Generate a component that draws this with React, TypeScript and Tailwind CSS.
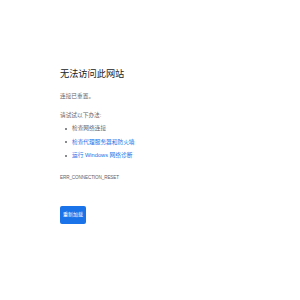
export default function App() {
  const items = [
    { text: '检查网络连接', link: false },
    { text: '检查代理服务器和防火墙', link: true },
    { text: '运行 Windows 网络诊断', link: true },
  ];

  return (
    <div
      className="w-[300px] h-[300px] bg-white text-[#5f6368]"
      style={{ fontFamily: '"Liberation Sans", "Noto Sans CJK SC", sans-serif' }}
    >
      <div className="pt-[67px] pl-[60px] flex flex-col">
        <h1 className="text-[9.2px] leading-[14px] text-[#202124]">无法访问此网站</h1>
        <p className="mt-[11px] text-[5.7px] leading-[8px]">连接已重置。</p>
        <p className="mt-[11px] text-[5.7px] leading-[8px]">请试试以下办法:</p>
        <ul className="mt-[3px] flex flex-col">
          {items.map(({ text, link }) => (
            <li key={text} className="flex items-center h-[13.5px] text-[5.7px]">
              <span className="w-[2px] h-[2px] rounded-full bg-[#5f6368] ml-[5px] mr-[5px]" />
              <span className={link ? 'text-[#1a73e8]' : ''}>{text}</span>
            </li>
          ))}
        </ul>
        <p className="mt-[11px] text-[4.6px] leading-[8px] tracking-[-0.1px]">ERR_CONNECTION_RESET</p>
        <div className="mt-[24px]">
          <button className="w-[26px] h-[18px] rounded-[2px] bg-[#1a73e8] text-white text-[5px] flex items-center justify-center">
            重新加载
          </button>
        </div>
      </div>
    </div>
  );
}
